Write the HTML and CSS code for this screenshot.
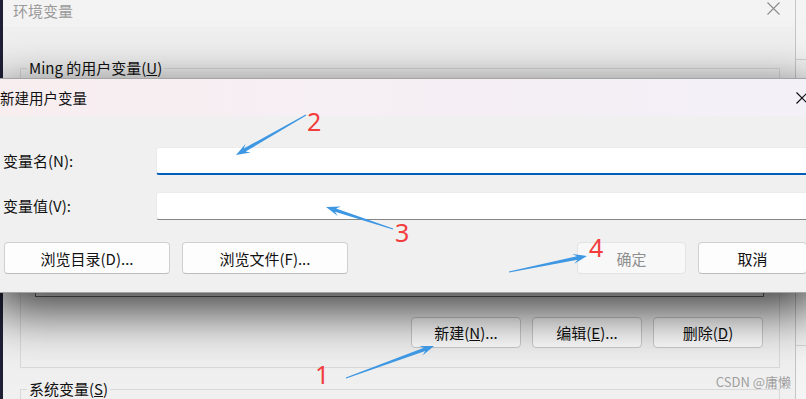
FILE: index.html
```html
<!DOCTYPE html>
<html lang="zh-CN">
<head>
    <meta charset="UTF-8">
    <title>环境变量</title>
    <link rel="stylesheet" href="styles.css">
</head>
<body>
<div class="screen">
    <div class="desktop-edge"></div>

    <div class="env-window">
        <div class="env-title">
            <span>环境变量</span>
            <svg class="close-icon" width="13" height="13" viewBox="0 0 13 13">
                <path d="M0.5 0.5 L12.5 12.5 M12.5 0.5 L0.5 12.5" stroke="#8c8c8c" stroke-width="1.1" fill="none"/>
            </svg>
        </div>
        <div class="env-body">
            <fieldset class="group">
                <legend>Ming 的用户变量(<u>U</u>)</legend>
                <div class="listbox"></div>
                <div class="group-buttons">
                    <button class="win-btn small">新建(<u>N</u>)...</button>
                    <button class="win-btn small">编辑(<u>E</u>)...</button>
                    <button class="win-btn small">删除(<u>D</u>)</button>
                </div>
            </fieldset>
            <fieldset class="group system">
                <legend>系统变量(<u>S</u>)</legend>
            </fieldset>
        </div>
    </div>

    <div class="side-window">
        <div class="side-line" style="margin-top: 59px"></div>
        <div class="side-line" style="margin-top: 285px"></div>
    </div>

    <!-- the dialog opened on top -->
    <div class="dialog">
        <div class="dialog-title">
            <span>新建用户变量</span>
            <svg width="12" height="12" viewBox="0 0 12 12">
                <path d="M0.5 0.5 L11.5 11.5 M11.5 0.5 L0.5 11.5" stroke="#111" stroke-width="1.2" fill="none"/>
            </svg>
        </div>
        <div class="dialog-body">
            <label class="field-label">变量名(N):</label>
            <input type="text" class="field-input focused">
            <label class="field-label">变量值(V):</label>
            <input type="text" class="field-input">
            <div class="dialog-buttons">
                <button class="win-btn wide">浏览目录(D)...</button>
                <button class="win-btn wide">浏览文件(F)...</button>
                <button class="win-btn narrow ok" disabled>确定</button>
                <button class="win-btn narrow">取消</button>
            </div>
        </div>
    </div>

    <svg class="marks" width="806" height="399" viewBox="0 0 806 399">
        <g fill="#3d97e2">
            <polygon points="305.75,114.57 243.79,148.48 245.67,143.72 236,155 250.63,152.40 245.57,151.60 306.25,115.43"/>
            <polygon points="393.16,228.53 336.06,208.41 340.86,206.62 326,207 337.74,216.12 334.94,211.83 392.84,229.48"/>
            <polygon points="509.10,272.49 577.56,259.77 574.29,263.71 587,256 572.27,253.91 576.84,256.25 508.90,271.51"/>
            <polygon points="346.17,378.47 425.22,351.11 422.55,355.49 434,346 419.13,346.09 423.98,347.73 345.83,377.53"/>
        </g>
        <g class="mark-num">
            <text x="307" y="131">2</text>
            <text x="395" y="242">3</text>
            <text x="589" y="257">4</text>
            <text x="315" y="384">1</text>
        </g>
    </svg>

    <div class="watermark">CSDN @庸懒</div>
</div>
</body>
</html>
```

FILE: styles.css
```css
body {
    margin: 0;
    font-family: "Noto Sans CJK SC", "Noto Sans", sans-serif;
    font-size: 15px;
    color: #111;
}
.screen {
    position: relative;
    display: flex;
    width: 806px;
    height: 399px;
    overflow: hidden;
    background: #f0f0f0;
}
.desktop-edge {
    width: 3px;
    background: #1f2036;
}
.env-window {
    width: 792px;
    border-right: 1px solid #c6c6c6;
    background: #f0f0f0;
}
.env-title {
    height: 24px;
    display: flex;
    justify-content: space-between;
    align-items: flex-start;
    padding: 3px 15px 0 10px;
    background: #f3f3f3;
    color: #9a9a9a;
    line-height: 16px;
}
.close-icon {
    margin-top: -1px;
}
.env-body {
    padding: 31px 15px 0 17px;
}
.group {
    margin: 0;
    padding: 0 15px 19px 14px;
    border: 1px solid #d9d9d9;
}
.group legend {
    margin-left: -8px;
    padding: 0 2px;
    line-height: 20px;
}
.group.system {
    margin-top: 11px;
}
.listbox {
    margin-top: 12px;
    height: 207px;
    box-sizing: border-box;
    background: #fff;
    border: 1px solid #6f6f6f;
}
.group-buttons {
    display: flex;
    justify-content: flex-end;
    gap: 11px;
    margin-top: 20px;
    padding-right: 1px;
}
.win-btn {
    box-sizing: border-box;
    height: 32px;
    padding: 0;
    font-family: inherit;
    font-size: 15px;
    color: #111;
    background: #fdfdfd;
    border: 1px solid #d0d0d0;
    border-bottom-color: #bdbdbd;
    border-radius: 4px;
}
.win-btn.small {
    width: 110px;
    height: 31px;
    border-color: #c9c9c9;
}
.win-btn.wide {
    width: 166px;
}
.win-btn.narrow {
    width: 109px;
}
.win-btn.ok {
    margin-left: auto;
    background: #f8f8f8;
    border-color: #e3e3e3;
    color: #8f8f8f;
}
.side-window {
    flex: 1;
    background: #f4f4f4;
}
.side-line {
    height: 1px;
    background: #d4d4d4;
}
.dialog {
    position: absolute;
    left: -8px;
    top: 78px;
    width: 830px;
    box-sizing: border-box;
    background: #f0f0f0;
    border: 1px solid #a4a4a4;
    box-shadow: 0 16px 50px rgba(0, 0, 0, 0.8);
    z-index: 2;
}
.dialog-title {
    height: 37px;
    display: flex;
    justify-content: space-between;
    align-items: center;
    padding: 0 13px 0 7px;
    background: linear-gradient(90deg, #f8eef0, #f3f0f8);
    font-size: 14.5px;
}
.dialog-body {
    display: grid;
    grid-template-columns: 153px 1fr;
    row-gap: 17px;
    align-items: center;
    padding: 31px 10px 18px 10px;
}
.field-label {
    line-height: 20px;
}
.field-input {
    height: 28px;
    box-sizing: border-box;
    margin: 0;
    padding: 0 8px;
    background: #fff;
    border: 1px solid #ebebeb;
    border-bottom: 1px solid #868686;
    border-radius: 3px;
    outline: none;
}
.field-input.focused {
    border-bottom: 2px solid #005fb8;
}
.dialog-buttons {
    grid-column: 1 / 3;
    display: flex;
    gap: 12px;
    margin-top: 5px;
    padding: 0 4px 0 1px;
}
.marks {
    position: absolute;
    left: 0;
    top: 0;
    z-index: 3;
    pointer-events: none;
}
.mark-num {
    fill: #f23d3d;
    font-family: "Noto Sans", sans-serif;
    font-size: 25px;
}
.watermark {
    position: absolute;
    right: 15px;
    bottom: 8px;
    z-index: 3;
    font-size: 13px;
    color: rgba(130, 130, 130, 0.75);
}
```
